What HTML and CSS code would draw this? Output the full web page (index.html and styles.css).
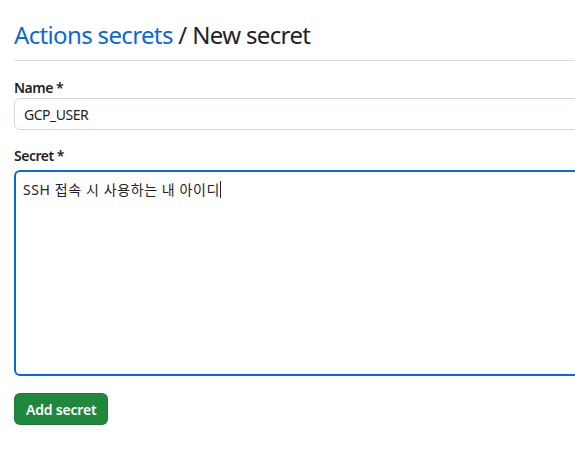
FILE: index.html
```html
<!DOCTYPE html>
<html lang="ko">
<head>
<meta charset="utf-8">
<title>New secret</title>
<link rel="stylesheet" href="styles.css">
</head>
<body>
<div class="page">
  <div class="subhead">
    <h2 class="subhead-heading"><a class="crumb" href="#">Actions secrets</a> / New secret</h2>
  </div>
  <form class="secret-form">
    <div class="form-group">
      <label class="form-label" for="name">Name *</label>
      <input class="form-control" id="name" type="text" value="GCP_USER">
    </div>
    <div class="form-group">
      <label class="form-label" for="secret">Secret *</label>
      <div class="textarea focused" id="secret">SSH 접속 시 사용하는 내 아이디<span class="caret"></span></div>
    </div>
    <button class="btn-primary" type="button">Add secret</button>
  </form>
</div>
</body>
</html>
```
FILE: styles.css
```css
html, body {
  margin: 0;
  padding: 0;
  background: #ffffff;
  overflow: hidden;
}
body {
  font-family: "Noto Sans", "Noto Sans CJK KR", sans-serif;
  color: #1f2328;
  font-size: 14px;
}
.page {
  width: 900px;
  padding: 0 0 0 14px;
}
.subhead {
  margin-top: 17px;
  padding-bottom: 7px;
  border-bottom: 1px solid #d8dee4;
  margin-bottom: 16px;
}
.subhead-heading {
  margin: 0;
  font-size: 24px;
  font-weight: 400;
  line-height: 36px;
  letter-spacing: -0.65px;
  color: #1f2328;
}
.crumb {
  color: #0969da;
  text-decoration: none;
}
.form-group {
  display: flex;
  flex-direction: column;
  margin-bottom: 15px;
}
.form-label {
  font-weight: 600;
  font-size: 14px;
  line-height: 21px;
  letter-spacing: -0.5px;
}
.form-control {
  box-sizing: border-box;
  height: 32px;
  width: 100%;
  padding: 0 9px;
  border: 1px solid #d0d7de;
  border-radius: 6px;
  font-family: "Noto Sans", "Noto Sans CJK KR", sans-serif;
  font-size: 14px;
  letter-spacing: -0.5px;
  color: #1f2328;
  background: #ffffff;
  outline: none;
}
.textarea {
  box-sizing: border-box;
  margin-top: 4px;
  height: 206px;
  padding: 7px 7px;
  border: 2px solid #0969da;
  border-radius: 6px;
  font-family: "Noto Sans", "Noto Sans CJK KR", sans-serif;
  font-size: 14px;
  line-height: 22px;
  letter-spacing: 0.6px;
  color: #1f2328;
}
.caret {
  display: inline-block;
  width: 1px;
  height: 17px;
  background: #1f2328;
  vertical-align: -3px;
}
.btn-primary {
  margin-top: 2px;
  height: 32px;
  padding: 0 11px;
  border: 1px solid rgba(31, 35, 40, 0.15);
  border-radius: 6px;
  background: #1f883d;
  color: #ffffff;
  font-family: "Noto Sans", sans-serif;
  font-size: 14px;
  font-weight: 600;
  letter-spacing: -0.2px;
}
```
